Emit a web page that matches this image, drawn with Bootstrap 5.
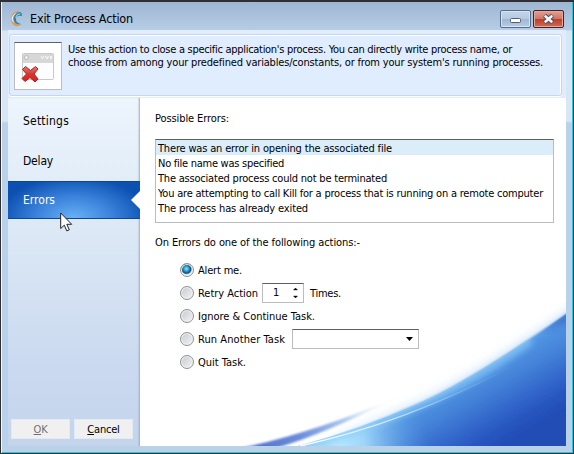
<!DOCTYPE html>
<html lang="en">
<head>
<meta charset="utf-8">
<title>Exit Process Action</title>
<link href="https://cdn.jsdelivr.net/npm/bootstrap@5.3.0/dist/css/bootstrap.min.css" rel="stylesheet">
<style>
body{margin:0;width:574px;height:454px;overflow:hidden;font:11px/15px "DejaVu Sans Condensed","DejaVu Sans",sans-serif;font-stretch:condensed;color:#000;letter-spacing:-.2px;white-space:nowrap}
.win{width:574px;height:454px;border:1px solid #302f36;border-top-width:2px;box-shadow:inset 1px 0 #f3f7fb,inset -1px -1px #1fc8e4;padding:0 7px}
.win-bg{background:linear-gradient(#9db6d2 0,#b7cde6 28px,#d9e7f4 29px,#d9e7f4 119px,#bad1ea 121px)}
.titlebar{height:28px;padding:5px 2px 0 2px}
.title-text{font-size:12.5px;margin-left:5px}
.winbtn{width:31px;height:18px;border:1px solid #5b6d86;border-radius:2px;background:linear-gradient(#c5d6e9,#b4c9e1 48%,#9db7d4 50%,#b5cce5);box-shadow:inset 0 0 0 1px #d5e3f2}
.winbtns{gap:2px;margin-top:0}
.winbtn.closer{border-color:#4f1d20;background:linear-gradient(#e1a093,#d27664 48%,#bb3d2a 50%,#cf6b50);box-shadow:inset 0 0 0 1px #e4a999}
.head{height:68px;width:558px;background:#e0ecff;padding:4px 4px 2px 1px}
.head-in{height:62px;border:1px solid #c9d6e6;border-radius:3px;box-shadow:inset 0 1px #fff,inset -1px 0 #fff,0 1px #fff;padding:7px 0 0 4px}
.pic{width:48px;height:48px;background:#fff;border:1px solid #bcbcbc;border-top-color:#606068}
.desc{line-height:13px;margin:1px 0 0 6px}
.work{height:348px}
.side{width:132px;background:linear-gradient(#edf5fd,#dce8f5 38%,#cbdaf0 75%,#c4d4ea);box-shadow:inset -2px 0 2px -1px #9aabc2;padding-top:3px}
.tab-item{height:40px;padding-left:15px;font-size:12px}
.tab-item.on{height:38px;color:#fff;border:solid #0b4795;border-width:1px 0;background:radial-gradient(ellipse 75px 42px at 50% 100%,#68b1f5,#3b83dc 50%,#0c50b1);position:relative}
.tab-item.on .t{padding-top:1px}
.tab-item.on::after{content:"";position:absolute;right:0;top:9px;border:9px solid transparent;border-right-color:#fff;border-left:0}
.pushes{gap:4px;padding:0 0 7px 3px}
.push{width:59px;height:20px;background:#f0f0f0;border:1px solid #e1eaf6;line-height:19px;text-align:center}
.push.off{color:#707070}
.main{width:426px;background:#fff;position:relative}
.swoosh{position:absolute;left:0;top:0}
.layer{position:relative;padding:13px 12px 0 15px}
.errs{width:399px;height:84px;border:1px solid #bcbcbc;border-top-color:#5c5f67;background:#fff;margin-top:13px}
.errs div{height:15px;padding-left:2px;line-height:17px}
.errs div:first-child{background:#dbedf8}
.lead-in{margin:12px 0 8px}
.opt{height:23px;padding-left:25px}
.opt .t{padding-top:1px}
.radio{width:14px;height:14px;border-radius:50%;border:1px solid #8e9094;background:linear-gradient(135deg,#c5c9ce,#f3f4f6);box-shadow:inset 0 0 0 1px #f3f3f3;margin-right:4px}
.radio.on{background:radial-gradient(circle at 45% 40%,#9ae4fb 0,#2b9fce 25%,#124a75 46%,#e5eaf0 60%)}
.field{border:1px solid #bcbcbc;border-top-color:#5c5f67;background:#fff;height:20px}
.spin{width:42px;margin:0 6px 0 4px;padding:0 5px 0 10px}
.combo{width:127px;margin-left:7px;padding-right:5px}
.cursor{position:absolute;left:60px;top:212px}
</style>
<script src="https://cdn.jsdelivr.net/npm/bootstrap@5.3.0/dist/js/bootstrap.bundle.min.js"></script>
</head>
<body>
<div class="win win-bg">
  <div class="titlebar d-flex align-items-center">
    <svg width="15" height="17" viewBox="0 0 15 17"><path d="M8 1C2 2-1 8 2 13c2 4 7 4 10 1-5 1-8-1-8-5 0-3 2-6 6-7z" fill="#e09a51"/><path d="M10 2C5 2 2 6 3 10c1 3 4 5 8 4-4-1-5-3-5-5 0-3 3-4 6-3 0-2 0-3-2-4z" fill="#3586ae"/><path d="M7 3c-4 2-5 7-2 10C2 12 1 9 2 7c1-2 3-4 5-4z" fill="#f5eee1"/><path d="M10 4c-3 0-4 2-4 4" stroke="#b9e5ee" fill="none"/></svg>
    <span class="title-text"><span class="t" data-w="103">Exit Process Action</span></span>
    <div class="winbtns ms-auto d-flex">
      <div class="winbtn d-flex"><svg width="29" height="16"><rect x="9.500" y="7.500" width="10" height="4" rx="1" fill="#fff" stroke="#535d6b"/></svg></div>
      <div class="winbtn closer d-flex"><svg width="29" height="16"><path d="M10.500 4.500l8 7M18.500 4.500l-8 7" stroke="#4d5061" stroke-width="4.600"/><path d="M10.800 4.800l7.400 6.400M18.200 4.800l-7.400 6.400" stroke="#f6f6f8" stroke-width="2.500"/></svg></div>
    </div>
  </div>
  <div class="head"><div class="head-in d-flex">
    <div class="pic"><svg class="d-block" width="46" height="46" viewBox="0 0 46 46"><defs><linearGradient id="r" x2="0" y2="1"><stop stop-color="#ee7770"/><stop offset=".5" stop-color="#d33532"/><stop offset="1" stop-color="#e41c16"/></linearGradient></defs><rect x="7.500" y="10.500" width="31" height="26" rx="1" fill="#fdfdfd" stroke="#c8c8c8"/><path d="M8 11h30v9H8z" fill="#d7d7d7"/><circle cx="11.500" cy="14.500" r="2" fill="#eee" stroke="#bbb"/><path d="M26 13l1.500 3 1.500-3M30.500 13l1.500 3 1.500-3M35 13l1 3 1-3" stroke="#f7f7f7" fill="none"/><path d="M7.500 26.500l3-3 5 4 5-4 2.500 2.500-4 5 4 5-3 3-5-4.500-5 4-3-3 4.500-4.500z" fill="url(#r)" stroke="#a62322"/></svg></div>
    <div class="desc"><span class="t" data-w="444">Use this action to close a specific application's process. You can directly write process name, or</span><br><span class="t" data-w="475">choose from among your predefined variables/constants, or from your system's running processes.</span></div>
  </div></div>
  <div class="work d-flex">
    <div class="side d-flex flex-column">
      <div class="tab-item d-flex align-items-center"><span class="t" data-w="46">Settings</span></div>
      <div class="tab-item d-flex align-items-center"><span class="t" data-w="30">Delay</span></div>
      <div class="tab-item on d-flex align-items-center"><span class="t" data-w="32">Errors</span></div>
      <div class="pushes mt-auto d-flex"><div class="push off"><u>O</u>K</div><div class="push"><u>C</u>ancel</div></div>
    </div>
    <div class="main">
      <svg class="swoosh" width="426" height="348" viewBox="140 98 426 348">
        <defs>
          <filter id="b7" x="-20%" y="-20%" width="140%" height="140%"><feGaussianBlur stdDeviation="7"/></filter>
          <filter id="b1"><feGaussianBlur stdDeviation="1"/></filter>
          <filter id="b3" x="-10%" y="-10%" width="120%" height="120%"><feGaussianBlur stdDeviation="3.500"/></filter>
          <filter id="b0"><feGaussianBlur stdDeviation=".5"/></filter>
          <linearGradient id="sea" gradientUnits="userSpaceOnUse" x1="350" y1="428" x2="396" y2="508"><stop stop-color="#6fb1ed"/><stop offset=".2" stop-color="#4f92e1"/><stop offset=".42" stop-color="#4280d7"/><stop offset=".7" stop-color="#2f62c8"/><stop offset=".85" stop-color="#2654be"/><stop offset="1" stop-color="#214db5"/></linearGradient>
          <radialGradient id="foam" gradientUnits="userSpaceOnUse" cx="338" cy="446" r="90"><stop stop-color="#b6e8ff"/><stop offset=".3" stop-color="#a6dcfb" stop-opacity=".9"/><stop offset="1" stop-color="#5a9ce4" stop-opacity="0"/></radialGradient>
          <linearGradient id="arc" gradientUnits="userSpaceOnUse" x1="245" y1="446" x2="395" y2="397"><stop stop-color="#4d70c8"/><stop offset=".35" stop-color="#6b8cda"/><stop offset=".65" stop-color="#a9c9ee"/><stop offset="1" stop-color="#fff" stop-opacity="0"/></linearGradient>
          <linearGradient id="ln" gradientUnits="userSpaceOnUse" x1="300" y1="446" x2="520" y2="362"><stop stop-color="#fff"/><stop offset=".4" stop-color="#c5e8fd"/><stop offset="1" stop-color="#69a5e8" stop-opacity="0"/></linearGradient>
          <clipPath id="cp"><path d="M566 314Q475 379 420 403Q360 430 290 448H566z"/></clipPath>
        </defs>
        <path d="M600 293Q480 378 420 406Q370 428 320 450H600z" fill="#8fc3f2" filter="url(#b7)"/>
        <path d="M580 304Q475 379 420 403Q360 430 290 451H580z" fill="url(#sea)" filter="url(#b1)"/>
        <g clip-path="url(#cp)">
          <path d="M290 390h150v60H290z" fill="url(#foam)"/>
          <path d="M530 339Q475 379 420 403Q360 430 285 449" fill="none" stroke="#8acbf8" stroke-width="11" filter="url(#b3)" opacity=".75"/>
          <path d="M574 304L540 332L570 322z" fill="#3464c4" opacity=".7" filter="url(#b3)"/>
        </g>
        <path d="M300 446Q410 422 520 362" fill="none" stroke="url(#ln)" stroke-width="1.400" filter="url(#b0)"/>
        <path d="M241 448Q310 434 400 396Q325 434 276 448z" fill="url(#arc)" filter="url(#b1)"/>
      </svg>
      <div class="layer">
        <div><span class="t" data-w="74">Possible Errors:</span></div>
        <div class="errs">
          <div><span class="t" data-w="234">There was an error in opening the associated file</span></div>
          <div><span class="t" data-w="126">No file name was specified</span></div>
          <div><span class="t" data-w="229">The associated process could not be terminated</span></div>
          <div><span class="t" data-w="385">You are attempting to call Kill for a process that is running on a remote computer</span></div>
          <div><span class="t" data-w="150">The process has already exited</span></div>
        </div>
        <div class="lead-in"><span class="t" data-w="205">On Errors do one of the following actions:-</span></div>
        <div class="opt d-flex align-items-center"><span class="radio on"></span><span class="t" data-w="44">Alert me.</span></div>
        <div class="opt d-flex align-items-center"><span class="radio"></span><span class="t" data-w="60">Retry Action</span>
          <div class="field spin d-flex align-items-center justify-content-between"><span>1</span><svg width="5" height="12"><path d="M.5 3L2.500 1l2 2zM.5 9h4l-2 2z" stroke="#000" stroke-width=".4"/></svg></div><span class="t" data-w="31">Times.</span></div>
        <div class="opt d-flex align-items-center"><span class="radio"></span><span class="t" data-w="117">Ignore &amp; Continue Task.</span></div>
        <div class="opt d-flex align-items-center"><span class="radio"></span><span class="t" data-w="87">Run Another Task</span>
          <div class="field combo d-flex align-items-center justify-content-end"><svg width="7" height="4"><path d="M0 0h7L3.500 4z"/></svg></div></div>
        <div class="opt d-flex align-items-center"><span class="radio"></span><span class="t" data-w="48">Quit Task.</span></div>
      </div>
    </div>
  </div>
</div>
<svg class="cursor" width="13" height="20" viewBox="0 0 13 20"><path d="M.7 1v15.500l3.600-3.300 2.500 5.700 2.500-1.100-2.500-5.500h4.900z" fill="#fff" stroke="#222" stroke-width="1"/></svg>
<script>
// Fit each label to its nominal width through letter spacing.
document.querySelectorAll('.t').forEach(function(e){
  e.style.letterSpacing='0px';
  var w=e.getBoundingClientRect().width;
  e.style.letterSpacing=((e.dataset.w-w)/e.textContent.length)+'px';
});
</script>
</body>
</html>
